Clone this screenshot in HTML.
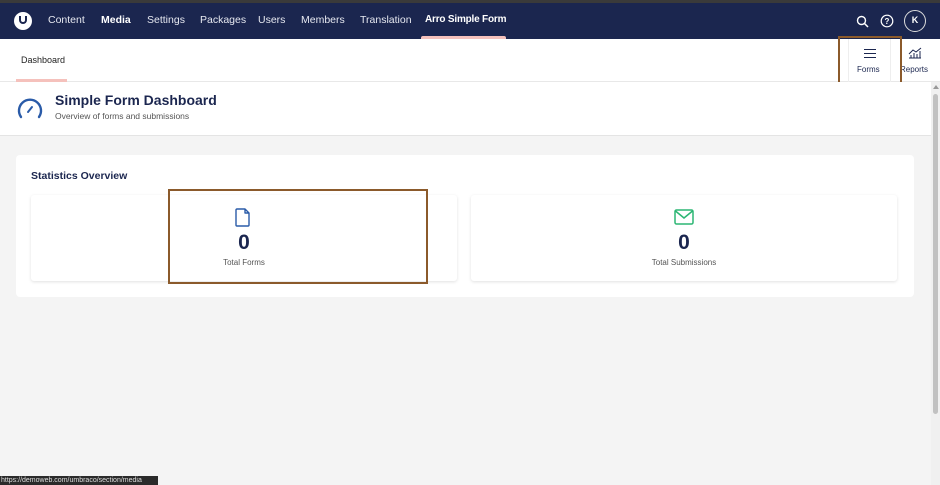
<!DOCTYPE html>
<html><head><style>
*{margin:0;padding:0;box-sizing:border-box}
body{width:940px;height:485px;overflow:hidden;background:#f4f4f4;font-family:"Liberation Sans",sans-serif;position:relative}
.top{position:absolute;left:0;top:0;width:940px;height:3px;background:#3a3a3a}
.nav{position:absolute;left:0;top:3px;width:940px;height:36px;background:#1b264f;color:#e6e8f0;font-size:10.5px}
.nav span{position:absolute;top:11px}
.sub{position:absolute;left:0;top:39px;width:940px;height:43px;background:#fff;border-bottom:1px solid #e8e8e8}
.hdr{position:absolute;left:0;top:82px;width:931px;height:54px;background:#fff;border-bottom:1px solid #e4e4e4}
.card{position:absolute;left:16px;top:155px;width:898px;height:142px;background:#fff;border-radius:4px}
.box{position:absolute;top:40px;width:426px;height:86px;background:#fff;border-radius:3px;box-shadow:0 1px 3px rgba(0,0,0,.12);text-align:center}
.num{position:absolute;left:0;right:0;top:36px;font-size:21px;font-weight:bold;color:#1b264f}
.lbl{position:absolute;left:0;right:0;top:63px;font-size:8px;color:#555}
</style></head><body>
<div class="top"></div>
<div class="nav">
<div style="position:absolute;left:14px;top:9px;width:18px;height:18px;border-radius:50%;background:#fff"><div style="position:absolute;left:5px;top:4px;width:8px;height:8px;border:2px solid #1b264f;border-top:none;border-radius:0 0 4px 4px"></div></div>
<span style="left:48px">Content</span><span style="left:101px;font-weight:bold;color:#fff">Media</span><span style="left:147px">Settings</span><span style="left:200px">Packages</span><span style="left:258px">Users</span><span style="left:301px">Members</span><span style="left:360px">Translation</span><span style="left:425px;font-weight:bold;color:#fff;font-size:10px;letter-spacing:-0.2px">Arro Simple Form</span>
<div style="position:absolute;left:421px;top:33px;width:85px;height:3px;background:#f5c1bc;border-radius:2px 2px 0 0"></div>
<svg style="position:absolute;left:856px;top:12px" width="13" height="13" viewBox="0 0 13 13"><circle cx="5.5" cy="5.5" r="4" fill="none" stroke="#fff" stroke-width="1.4"/><path d="M8.5 8.5L12 12" stroke="#fff" stroke-width="1.5"/></svg>
<svg style="position:absolute;left:880px;top:11px" width="14" height="14" viewBox="0 0 14 14"><circle cx="7" cy="7" r="5.8" fill="none" stroke="#fff" stroke-width="1.2"/><text x="7" y="10" font-size="8" fill="#fff" text-anchor="middle" font-family="Liberation Sans" font-weight="bold">?</text></svg>
<div style="position:absolute;left:904px;top:7px;width:22px;height:22px;border-radius:50%;border:1.5px solid #ddd;color:#fff;font-size:9px;font-weight:bold;text-align:center;line-height:19px">K</div>
</div>
<div class="sub">
<span style="position:absolute;left:21px;top:16px;font-size:9px;color:#222">Dashboard</span>
<div style="position:absolute;left:16px;top:40px;width:51px;height:3px;background:#f5c1bc"></div>
<div style="position:absolute;left:848px;top:0;width:1px;height:43px;background:#eee"></div>
<div style="position:absolute;left:890px;top:0;width:1px;height:43px;background:#eee"></div>
<div style="position:absolute;left:864px;top:10px;width:12px;height:1.2px;background:#1b264f;box-shadow:0 4px 0 #1b264f,0 8px 0 #1b264f"></div>
<span style="position:absolute;left:857px;top:26px;font-size:8px;color:#1b264f">Forms</span>
<svg style="position:absolute;left:908px;top:8px" width="14" height="12" viewBox="0 0 14 12"><path d="M1 11h12M3 11V8M6 11V6M9 11V7M12 11V4M1 7l4-4 3 2 5-4" stroke="#1b264f" fill="none" stroke-width="1"/></svg>
<span style="position:absolute;left:900px;top:26px;font-size:8px;color:#1b264f">Reports</span>
<div style="position:absolute;left:838px;top:-3px;width:64px;height:51px;border:2px solid #8b5a2b"></div>
</div>
<div class="hdr">
<svg style="position:absolute;left:15px;top:13px" width="30" height="26" viewBox="0 0 30 26"><path d="M6 22A11 11 0 1 1 24 22" fill="none" stroke="#2a5ba8" stroke-width="2.4" stroke-linecap="round"/><path d="M13 17l4-5" stroke="#2a5ba8" stroke-width="2" stroke-linecap="round"/></svg>
<div style="position:absolute;left:55px;top:10px;font-size:14px;font-weight:bold;color:#1b264f">Simple Form Dashboard</div>
<div style="position:absolute;left:55px;top:29px;font-size:8.5px;color:#555">Overview of forms and submissions</div>
</div>
<div style="position:absolute;left:931px;top:82px;width:9px;height:403px;background:#f0f0f0"><div style="position:absolute;left:2px;top:12px;width:5px;height:320px;background:#c1c1c1;border-radius:3px"></div><div style="position:absolute;left:2px;top:3px;border:3px solid transparent;border-bottom:4px solid #999;border-top:none"></div></div>
<div class="card">
<div style="position:absolute;left:15px;top:15px;font-size:10.5px;font-weight:bold;color:#1b264f">Statistics Overview</div>
<div class="box" style="left:15px">
<svg style="position:absolute;left:204px;top:13px" width="16" height="19" viewBox="0 0 16 19"><path d="M2 1h8l4 4v12a1 1 0 0 1-1 1H2a1 1 0 0 1-1-1V2a1 1 0 0 1 1-1zM10 1v4h4" fill="none" stroke="#2a5ba8" stroke-width="1.4" stroke-linejoin="round"/></svg>
<div class="num">0</div><div class="lbl">Total Forms</div></div>
<div class="box" style="left:455px">
<svg style="position:absolute;left:203px;top:14px" width="20" height="16" viewBox="0 0 20 16"><rect x="1" y="1" width="18" height="14" rx="1.5" fill="none" stroke="#2bb673" stroke-width="1.5"/><path d="M1.5 2l8.5 7 8.5-7" fill="none" stroke="#2bb673" stroke-width="1.5"/></svg>
<div class="num">0</div><div class="lbl">Total Submissions</div></div>
</div>
<div style="position:absolute;left:168px;top:189px;width:260px;height:95px;border:2px solid #8b5a2b"></div>
<div style="position:absolute;left:0;top:476px;width:158px;height:9px;background:#2a2a2a;color:#ddd;font-size:7px;line-height:9px;padding-left:1px">https://demoweb.com/umbraco/section/media</div>
</body></html>
